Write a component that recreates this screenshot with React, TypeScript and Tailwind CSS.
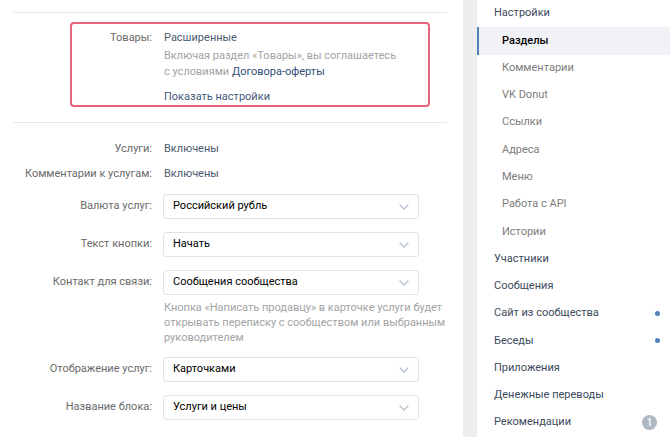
import { ReactNode } from 'react';

const font = { fontFamily: 'Roboto, "Noto Sans", sans-serif' };

function Chevron() {
  return (
    <svg width="10" height="6" viewBox="0 0 10 6" fill="none">
      <path d="M1 1l4 4 4-4" stroke="#b4bfcb" strokeWidth="1.3" strokeLinecap="round" strokeLinejoin="round" />
    </svg>
  );
}

function SelectRow({ label, value, mt }: { label: string; value: string; mt: string }) {
  return (
    <div className={`flex items-center ${mt}`}>
      <div className="w-[152px] text-right text-[#6a6a6a]">{label}</div>
      <div className="ml-[11px] w-[256px] h-[25px] border border-[#dfe3e8] rounded-[3px] flex items-center justify-between pl-[9px] pr-[9px] text-black">
        <span>{value}</span>
        <Chevron />
      </div>
    </div>
  );
}

function InfoRow({ label, children, mt }: { label: string; children: ReactNode; mt: string }) {
  return (
    <div className={`flex h-[16px] leading-[16px] ${mt}`}>
      <div className="w-[152px] text-right text-[#6a6a6a]">{label}</div>
      <div className="ml-[12px] text-[#4b5b6e]">{children}</div>
    </div>
  );
}

type Item = { label: string; level: 'top' | 'sub'; active?: boolean; dot?: boolean; badge?: string };

const menu: Item[] = [
  { label: 'Настройки', level: 'top' },
  { label: 'Разделы', level: 'sub', active: true },
  { label: 'Комментарии', level: 'sub' },
  { label: 'VK Donut', level: 'sub' },
  { label: 'Ссылки', level: 'sub' },
  { label: 'Адреса', level: 'sub' },
  { label: 'Меню', level: 'sub' },
  { label: 'Работа с API', level: 'sub' },
  { label: 'Истории', level: 'sub' },
  { label: 'Участники', level: 'top' },
  { label: 'Сообщения', level: 'top' },
  { label: 'Сайт из сообщества', level: 'top', dot: true },
  { label: 'Беседы', level: 'top', dot: true },
  { label: 'Приложения', level: 'top' },
  { label: 'Денежные переводы', level: 'top' },
  { label: 'Рекомендации', level: 'top', badge: '1' },
];

function MenuRow({ item }: { item: Item }) {
  const base = 'h-[27.27px] flex items-center justify-between';
  if (item.active) {
    return (
      <div className={`${base} border-l-2 border-[#5181b8] bg-[#f0f2f5] pl-[23px] font-medium text-black`}>
        {item.label}
      </div>
    );
  }
  return (
    <div
      className={`${base} ${item.level === 'top' ? 'pl-[17px] text-[#3b4a5c]' : 'pl-[25px] text-[#7d7d7d]'} ${
        item.badge ? 'pr-[13px]' : 'pr-[10px]'
      }`}
    >
      <span>{item.label}</span>
      {item.dot && <span className="w-[5px] h-[5px] rounded-full bg-[#5181b8]" />}
      {item.badge && (
        <span className="w-[15px] h-[15px] rounded-full bg-[#aeb7c2] text-white text-[10px] font-medium flex items-center justify-center">
          {item.badge}
        </span>
      )}
    </div>
  );
}

export default function App() {
  return (
    <div className="flex h-[437px] overflow-hidden bg-[#edeef0] text-[11px]" style={font}>
      {/* main settings panel */}
      <main className="w-[463px] bg-white pt-[12px]">
        <div className="ml-[13px] mr-[16px] border-t border-[#e7e8ec]" />

        {/* highlighted block */}
        <div className="ml-[70px] mt-[9px] w-[360px] h-[85px] border-2 border-[#e5637c] rounded-[4px] pt-[6px]">
          <div className="flex leading-[16px]">
            <div className="w-[80px] text-right text-[#6a6a6a]">Товары:</div>
            <div className="ml-[12px]">
              <div className="text-[#4b5b6e]">Расширенные</div>
              <div className="mt-[2px] text-[#a3a3a3]">
                Включая раздел «Товары», вы соглашаетесь
                <br />с условиями <span className="text-[#2f4f76]">Договора-оферты</span>
              </div>
              <div className="mt-[9px] text-[#44597a]">Показать настройки</div>
            </div>
          </div>
        </div>

        <div className="ml-[13px] mr-[16px] mt-[15px] border-t border-[#e7e8ec]" />

        <InfoRow label="Услуги:" mt="mt-[18px]">Включены</InfoRow>
        <InfoRow label="Комментарии к услугам:" mt="mt-[9px]">Включены</InfoRow>

        <SelectRow label="Валюта услуг:" value="Российский рубль" mt="mt-[12px]" />
        <SelectRow label="Текст кнопки:" value="Начать" mt="mt-[13px]" />
        <SelectRow label="Контакт для связи:" value="Сообщения сообщества" mt="mt-[13px]" />

        <div className="ml-[164px] mt-[5px] whitespace-nowrap leading-[15px] text-[#a3a3a3]">
          Кнопка «Написать продавцу» в карточке услуги будет
          <br />
          открывать переписку с сообществом или выбранным
          <br />
          руководителем
        </div>

        <SelectRow label="Отображение услуг:" value="Карточками" mt="mt-[12px]" />
        <SelectRow label="Название блока:" value="Услуги и цены" mt="mt-[13px]" />
      </main>

      {/* right menu */}
      <aside className="ml-[14px] flex-1 bg-white">
        {menu.map((item) => (
          <MenuRow key={item.label} item={item} />
        ))}
      </aside>
    </div>
  );
}
